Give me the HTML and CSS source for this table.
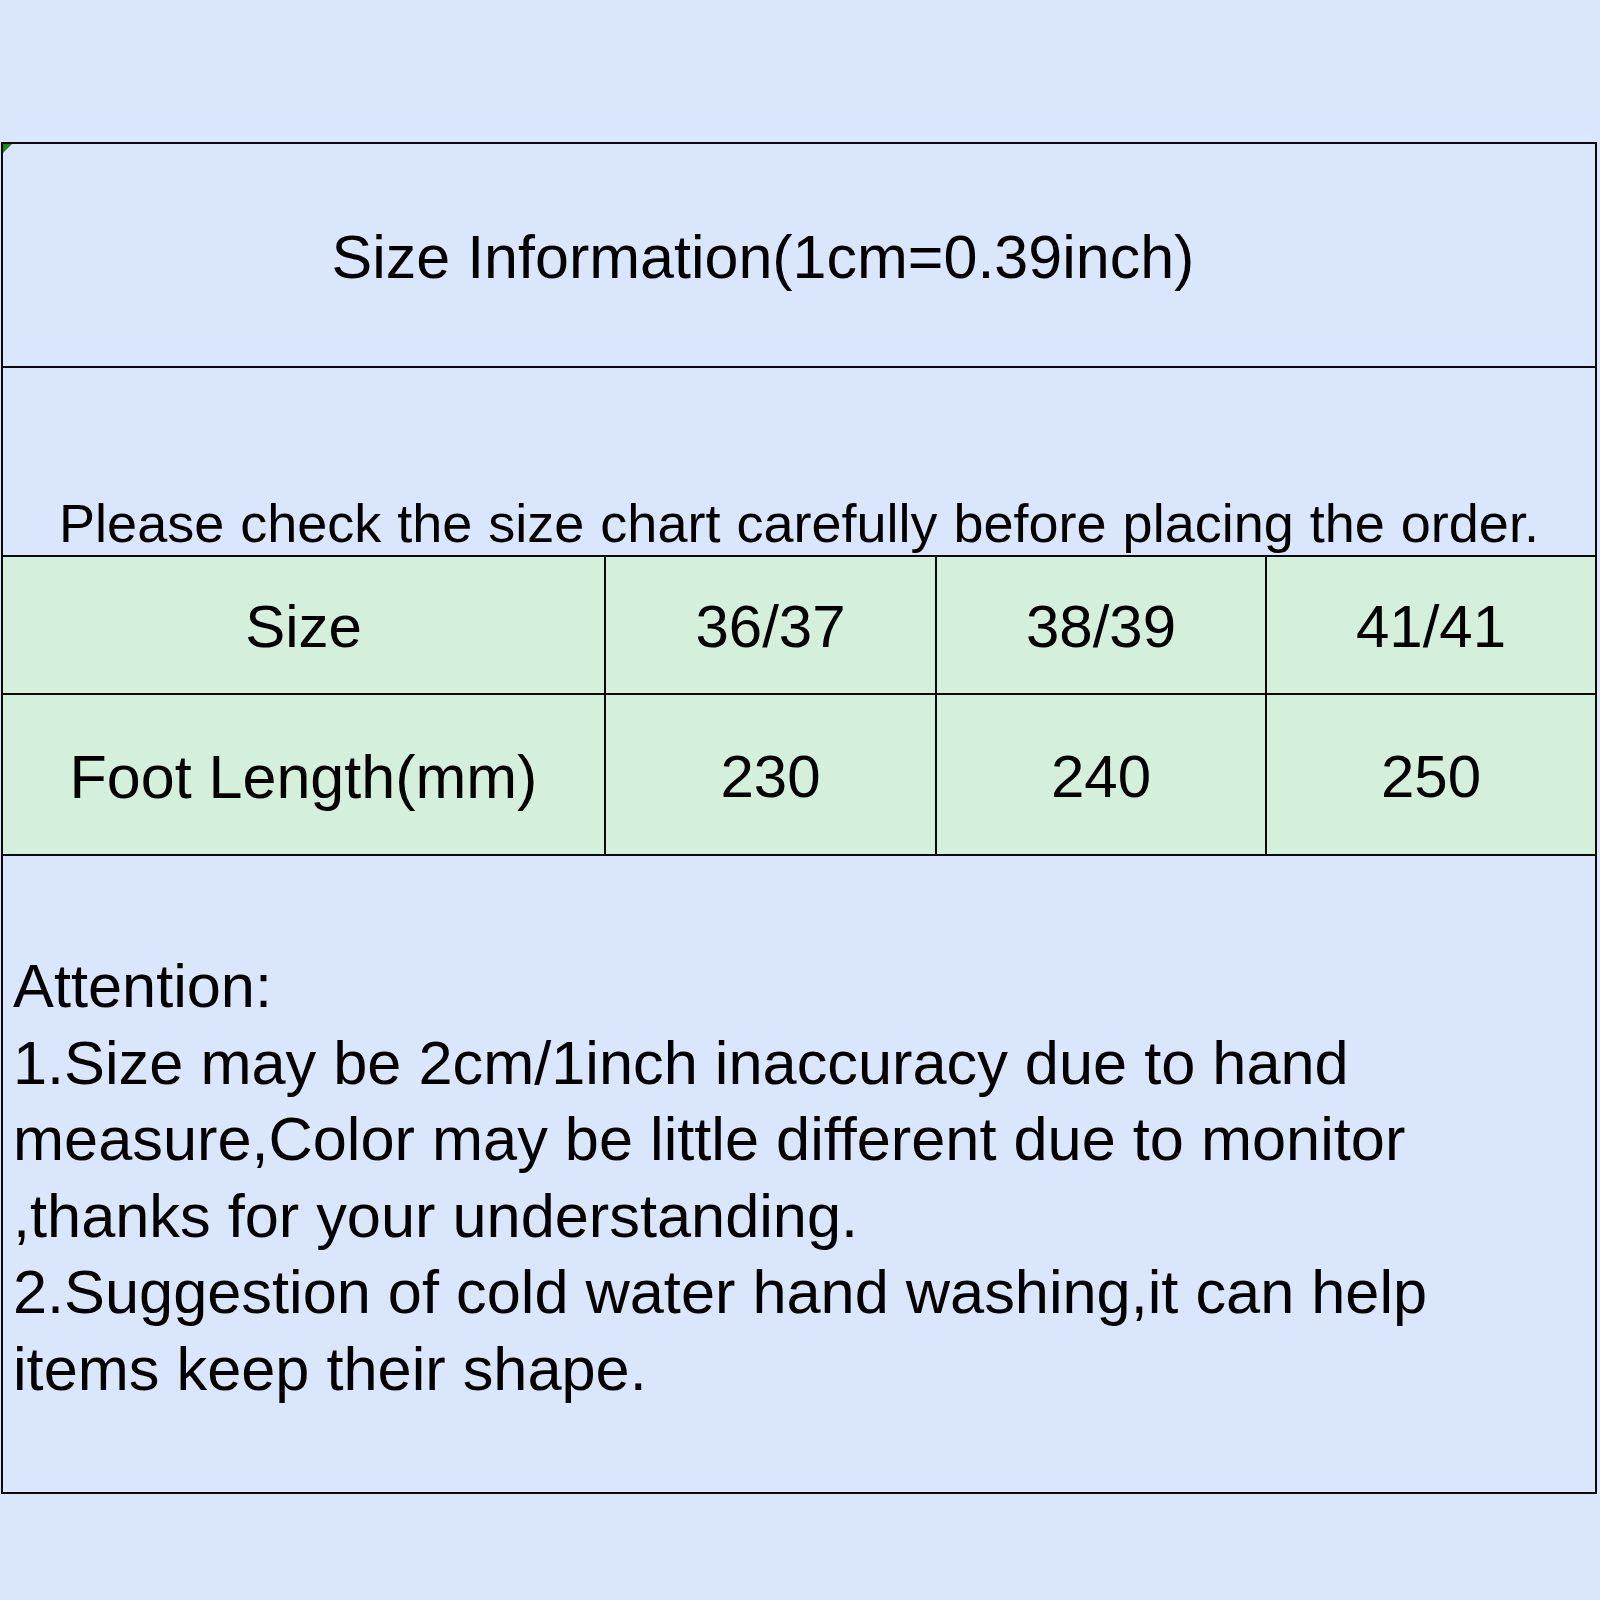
FILE: index.html
```html
<!DOCTYPE html>
<html lang="en">
<head>
<meta charset="utf-8">
<title>Size Information</title>
<link rel="stylesheet" href="styles.css">
</head>
<body>
<div class="sheet">
  <div class="title">Size Information(1cm=0.39inch)</div>
  <div class="note">Please check the size chart carefully before placing the order.</div>
  <div class="grid">
    <div class="cell c1 head">Size</div>
    <div class="cell head">36/37</div>
    <div class="cell head">38/39</div>
    <div class="cell head">41/41</div>
    <div class="cell c1 foot">Foot Length(mm)</div>
    <div class="cell foot">230</div>
    <div class="cell foot">240</div>
    <div class="cell foot">250</div>
  </div>
  <div class="attention">
    <p>Attention:<br>1.Size may be 2cm/1inch inaccuracy due to hand<br>measure,Color may be little different due to monitor<br>,thanks for your understanding.<br>2.Suggestion of cold water hand washing,it can help<br>items keep their shape.</p>
  </div>
</div>
</body>
</html>
```

FILE: styles.css
```css
html, body {
  margin: 0;
  padding: 0;
  background: #dae6fb;
}
body {
  height: 1600px;
  font-family: "Liberation Sans", Arial, sans-serif;
  color: #000;
}
.sheet {
  position: relative;
  box-sizing: border-box;
  margin: 142px 0 0 1px;
  width: 1596px;
  border: 2px solid #0a0a0a;
  background: #dae6fb;
}
.sheet::before {
  content: "";
  position: absolute;
  left: 0;
  top: 0;
  width: 0;
  height: 0;
  border-top: 9px solid #1a8a1a;
  border-right: 9px solid transparent;
}
.title {
  box-sizing: border-box;
  height: 224px;
  border-bottom: 2px solid #0a0a0a;
  display: flex;
  align-items: center;
  justify-content: center;
  font-size: 61px;
  padding: 4px 72px 0 0;
}
.note {
  box-sizing: border-box;
  height: 187px;
  display: flex;
  align-items: flex-end;
  justify-content: center;
  font-size: 54px;
  line-height: 60px;
  padding-bottom: 2px;
  word-spacing: 1px;
}
.grid {
  display: grid;
  grid-template-columns: 601px 331px 330px 1fr;
  grid-template-rows: 138px 161px;
  border-top: 2px solid #0a0a0a;
  background: #d4efdb;
}
.cell {
  display: flex;
  align-items: center;
  justify-content: center;
  font-size: 60px;
  border-left: 2px solid #0a0a0a;
  border-bottom: 2px solid #0a0a0a;
}
.cell.c1 {
  border-left: none;
}
.c1.foot {
  font-size: 61px;
}
.head {
  padding-top: 2px;
}
.foot {
  padding-top: 4px;
}
.attention {
  height: 636px;
  box-sizing: border-box;
  padding: 92px 0 0 10px;
}
.attention p {
  margin: 0;
  font-size: 61.3px;
  line-height: 76.5px;
}
```
